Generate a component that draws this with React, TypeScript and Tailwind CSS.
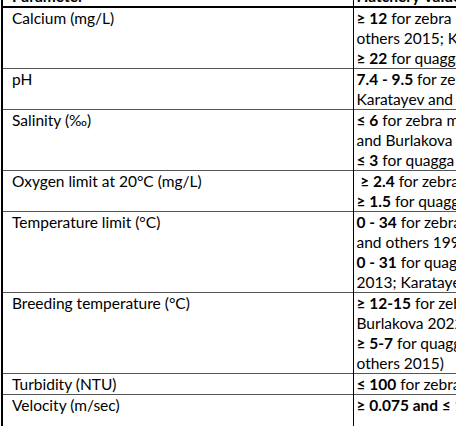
import React from "react";

type Seg = [string, string];
type Row = { param: string; lines: Seg[] };

const rows: Row[] = [
  {
    param: "Calcium (mg/L)",
    lines: [
      ["≥ 12", " for zebra mussel (Cohen and"],
      ["", "others 2015; Karatayev and Burlakova 2022)"],
      ["≥ 22", " for quagga mussel (Cohen and others 2015)"],
    ],
  },
  {
    param: "pH",
    lines: [
      ["7.4 - 9.5", " for zebra and quagga mussels"],
      ["", "Karatayev and Burlakova 2022)"],
    ],
  },
  {
    param: "Salinity (‰)",
    lines: [
      ["≤ 6", " for zebra mussel (Karatayev"],
      ["", "and Burlakova 2022)"],
      ["≤ 3", " for quagga mussel (Karatayev 2022)"],
    ],
  },
  {
    param: "Oxygen limit at 20°C (mg/L)",
    lines: [
      ["\u00a0≥ 2.4", " for zebra mussel (Cohen 2015)"],
      ["≥ 1.5", " for quagga mussel (Cohen 2015)"],
    ],
  },
  {
    param: "Temperature limit (°C)",
    lines: [
      ["0 - 34", " for zebra mussel (McMahon"],
      ["", "and others 1993; Karatayev 2022)"],
      ["0 - 31", " for quagga mussel (Mills"],
      ["", "2013; Karatayev and Burlakova 2022)"],
    ],
  },
  {
    param: "Breeding temperature (°C)",
    lines: [
      ["≥ 12-15", " for zebra mussel (Karatayev and"],
      ["", "Burlakova 2022)"],
      ["≥ 5-7", " for quagga mussel (Cohen and"],
      ["", "others 2015)"],
    ],
  },
  {
    param: "Turbidity (NTU)",
    lines: [["≤ 100", " for zebra and quagga mussels"]],
  },
  {
    param: "Velocity (m/sec)",
    lines: [
      ["≥ 0.075 and ≤ 1.5", " for zebra and quagga mussels"],
      ["", "\u00a0"],
    ],
  },
];

export default function App() {
  return (
    <div className="h-[426px] w-[456px] overflow-hidden bg-white">
      <table
        className="-mt-[14px] ml-px w-[760px] table-fixed border-collapse border-l-2 border-black text-[15.5px] leading-[20px] text-black"
        style={{ fontFamily: "Lato, 'Liberation Sans', sans-serif" }}
      >
        <colgroup>
          <col className="w-[351px]" />
          <col />
        </colgroup>
        <thead>
          <tr className="border-b-2 border-black">
            <th className="whitespace-nowrap border-r border-black pl-[9px] text-left font-bold">
              Parameter
            </th>
            <th className="whitespace-nowrap pl-[3px] text-left font-bold">
              Hatchery Value
            </th>
          </tr>
        </thead>
        <tbody>
          {rows.map((r) => (
            <tr key={r.param} className="border-b border-[#555]">
              <td className="whitespace-nowrap border-r border-black pl-[9px] align-top">
                {r.param}
              </td>
              <td className="pl-[3px] align-top">
                {r.lines.map((l, i) => (
                  <div key={i} className="whitespace-nowrap">
                    {l[0] && <span className="font-bold">{l[0]}</span>}
                    {l[1]}
                  </div>
                ))}
              </td>
            </tr>
          ))}
        </tbody>
      </table>
    </div>
  );
}
